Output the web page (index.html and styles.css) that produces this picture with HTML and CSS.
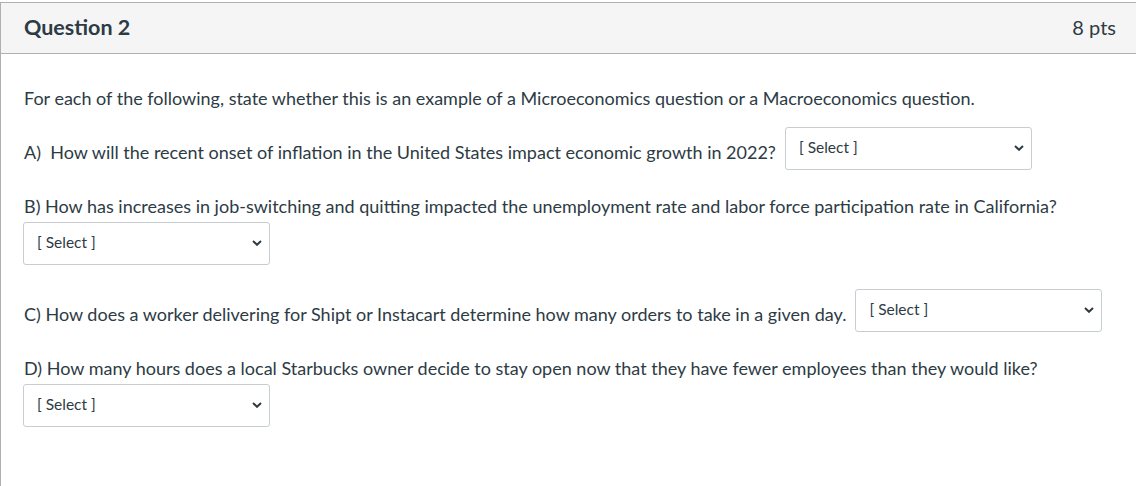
FILE: index.html
```html
<!DOCTYPE html>
<html lang="en">
<head>
<meta charset="utf-8">
<title>Question 2</title>
<link rel="stylesheet" href="styles.css">
</head>
<body>
<div class="question">
  <div class="q-header">
    <h3 class="q-name">Question 2</h3>
    <span class="q-points">8 pts</span>
  </div>
  <div class="q-body">
    <p class="intro">For each of the following, state whether this is an example of a Microeconomics question or a Macroeconomics question.</p>

    <div class="row">
      <span class="label">A)&nbsp; How will the recent onset of inflation in the United States impact economic growth in 2022?</span>
      <div class="select"><span class="sel-text">[ Select ]</span><svg class="chev" width="10" height="6" viewBox="0 0 10 6"><path d="M1 1 L5 4.8 L9 1" fill="none" stroke="#2d3b45" stroke-width="2"/></svg></div>
    </div>

    <div class="block">
      <p class="label">B) How has increases in job-switching and quitting impacted the unemployment rate and labor force participation rate in California?</p>
      <div class="select"><span class="sel-text">[ Select ]</span><svg class="chev" width="10" height="6" viewBox="0 0 10 6"><path d="M1 1 L5 4.8 L9 1" fill="none" stroke="#2d3b45" stroke-width="2"/></svg></div>
    </div>

    <div class="row">
      <span class="label">C) How does a worker delivering for Shipt or Instacart determine how many orders to take in a given day.</span>
      <div class="select"><span class="sel-text">[ Select ]</span><svg class="chev" width="10" height="6" viewBox="0 0 10 6"><path d="M1 1 L5 4.8 L9 1" fill="none" stroke="#2d3b45" stroke-width="2"/></svg></div>
    </div>

    <div class="block">
      <p class="label">D) How many hours does a local Starbucks owner decide to stay open now that they have fewer employees than they would like?</p>
      <div class="select"><span class="sel-text">[ Select ]</span><svg class="chev" width="10" height="6" viewBox="0 0 10 6"><path d="M1 1 L5 4.8 L9 1" fill="none" stroke="#2d3b45" stroke-width="2"/></svg></div>
    </div>
  </div>
</div>
</body>
</html>
```
FILE: styles.css
```css
html, body {
  margin: 0;
  padding: 0;
  background: #ffffff;
  overflow: hidden;
}
body {
  font-family: Lato, "Open Sans", "Liberation Sans", sans-serif;
  color: #2d3b45;
  padding-top: 2px;
}
.question {
  border-top: 1px solid #aeb1b3;
  border-left: 1px solid #aeb1b3;
  min-height: 600px;
}
.q-header {
  height: 48px;
  background: #f5f5f5;
  border-bottom: 1px solid #aeb1b3;
  display: flex;
  align-items: center;
  justify-content: space-between;
  padding: 0 20px 2px 23px;
}
.q-name {
  margin: 0;
  font-size: 21.5px;
  font-weight: 700;
  line-height: 24px;
}
.q-points {
  font-size: 20px;
  font-weight: 400;
  line-height: 24px;
}
.q-body {
  padding: 32px 23px 0 23px;
  font-size: 18px;
  line-height: 24px;
}
.intro {
  margin: 0 0 17px 0;
}
.row {
  display: flex;
  align-items: flex-end;
  gap: 9px;
  margin-bottom: 24px;
}
.row .label {
  margin-bottom: 6px;
}
.block {
  margin-bottom: 24px;
}
.block .label {
  margin: 0 0 4px 0;
}
.block .select {
  margin-left: -1px;
}
.select {
  box-sizing: border-box;
  width: 247px;
  height: 43px;
  border: 1px solid #c7cdd1;
  border-radius: 3px;
  background: #fff;
  display: flex;
  align-items: center;
  justify-content: space-between;
  padding: 0 7px 0 13px;
  flex-shrink: 0;
}
.sel-text {
  font-size: 15.5px;
  line-height: 20px;
  margin-top: -3px;
}
.chev {
  display: block;
  margin-top: -2px;
}
```
